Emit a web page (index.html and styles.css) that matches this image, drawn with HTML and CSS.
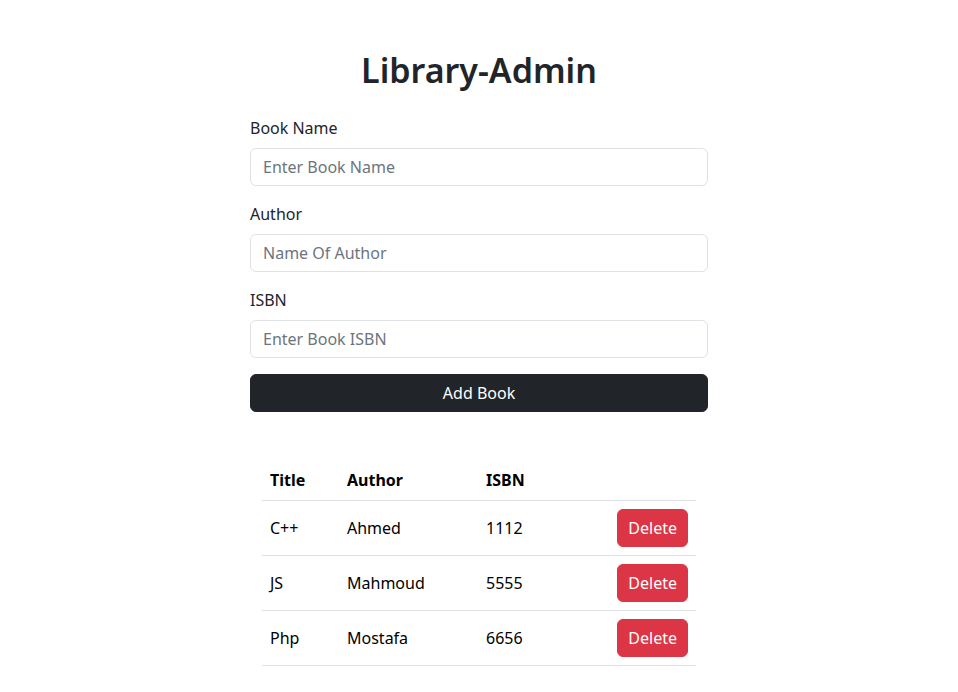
FILE: index.html
```html
<!DOCTYPE html>
<html lang="en">
<head>
<meta charset="utf-8">
<title>Library-Admin</title>
<link rel="stylesheet" href="styles.css">
</head>
<body>
<main class="container">
  <h1 class="title">Library-Admin</h1>
  <form class="book-form">
    <div class="field">
      <label class="label" for="name">Book Name</label>
      <input class="input" id="name" type="text" placeholder="Enter Book Name">
    </div>
    <div class="field">
      <label class="label" for="author">Author</label>
      <input class="input" id="author" type="text" placeholder="Name Of Author">
    </div>
    <div class="field">
      <label class="label" for="isbn">ISBN</label>
      <input class="input" id="isbn" type="text" placeholder="Enter Book ISBN">
    </div>
    <button class="btn btn-dark" type="button">Add Book</button>
  </form>
  <div class="table-wrap">
    <table class="table">
      <colgroup>
        <col class="c-title"><col class="c-author"><col class="c-isbn"><col class="c-action">
      </colgroup>
      <thead>
        <tr><th>Title</th><th>Author</th><th>ISBN</th><th></th></tr>
      </thead>
      <tbody>
        <tr><td>C++</td><td>Ahmed</td><td>1112</td><td class="act"><button class="btn btn-danger" type="button">Delete</button></td></tr>
        <tr><td>JS</td><td>Mahmoud</td><td>5555</td><td class="act"><button class="btn btn-danger" type="button">Delete</button></td></tr>
        <tr><td>Php</td><td>Mostafa</td><td>6656</td><td class="act"><button class="btn btn-danger" type="button">Delete</button></td></tr>
      </tbody>
    </table>
  </div>
</main>
</body>
</html>
```

FILE: styles.css
```css
* { box-sizing: border-box; }
html, body { margin: 0; padding: 0; background: #fff; }
body {
  font-family: "Noto Sans", "Open Sans", sans-serif;
  font-size: 16px;
  line-height: 1.5;
  color: #212529;
}
.container {
  width: 458px;
  margin: 0 auto;
  padding-top: 46px;
}
.title {
  margin: 0 0 22px;
  font-size: 34px;
  font-weight: 600;
  line-height: 48px;
  text-align: center;
}
.book-form { display: flex; flex-direction: column; }
.field { display: flex; flex-direction: column; margin-bottom: 16px; }
.label { display: block; margin-bottom: 8px; line-height: 24px; }
.input {
  display: block;
  width: 100%;
  height: 38px;
  padding: 6px 12px;
  font: inherit;
  color: #212529;
  border: 1px solid #dee2e6;
  border-radius: 6px;
  background: #fff;
}
.input::placeholder { color: #6c757d; opacity: 1; }
.btn {
  font: inherit;
  line-height: 24px;
  padding: 6px 12px;
  border: 1px solid transparent;
  border-radius: 6px;
  cursor: pointer;
  height: 38px;
}
.btn-dark { width: 100%; background: #212529; border-color: #212529; color: #fff; }
.btn-danger { background: #dc3545; border-color: #dc3545; color: #fff; padding: 6px 10px; }
.table-wrap { padding: 48px 12px 0; }
.table { width: 100%; table-layout: fixed; border-collapse: collapse; color: #000; }
.c-title { width: 77px; }
.c-author { width: 139px; }
.c-isbn { width: 131px; }
.c-action { width: 87px; }
.table th, .table td {
  padding: 8px;
  text-align: left;
  border-bottom: 1px solid #dee2e6;
  line-height: 24px;
  vertical-align: middle;
}
.table th { font-weight: 700; }
.table td.act { text-align: right; }
```
